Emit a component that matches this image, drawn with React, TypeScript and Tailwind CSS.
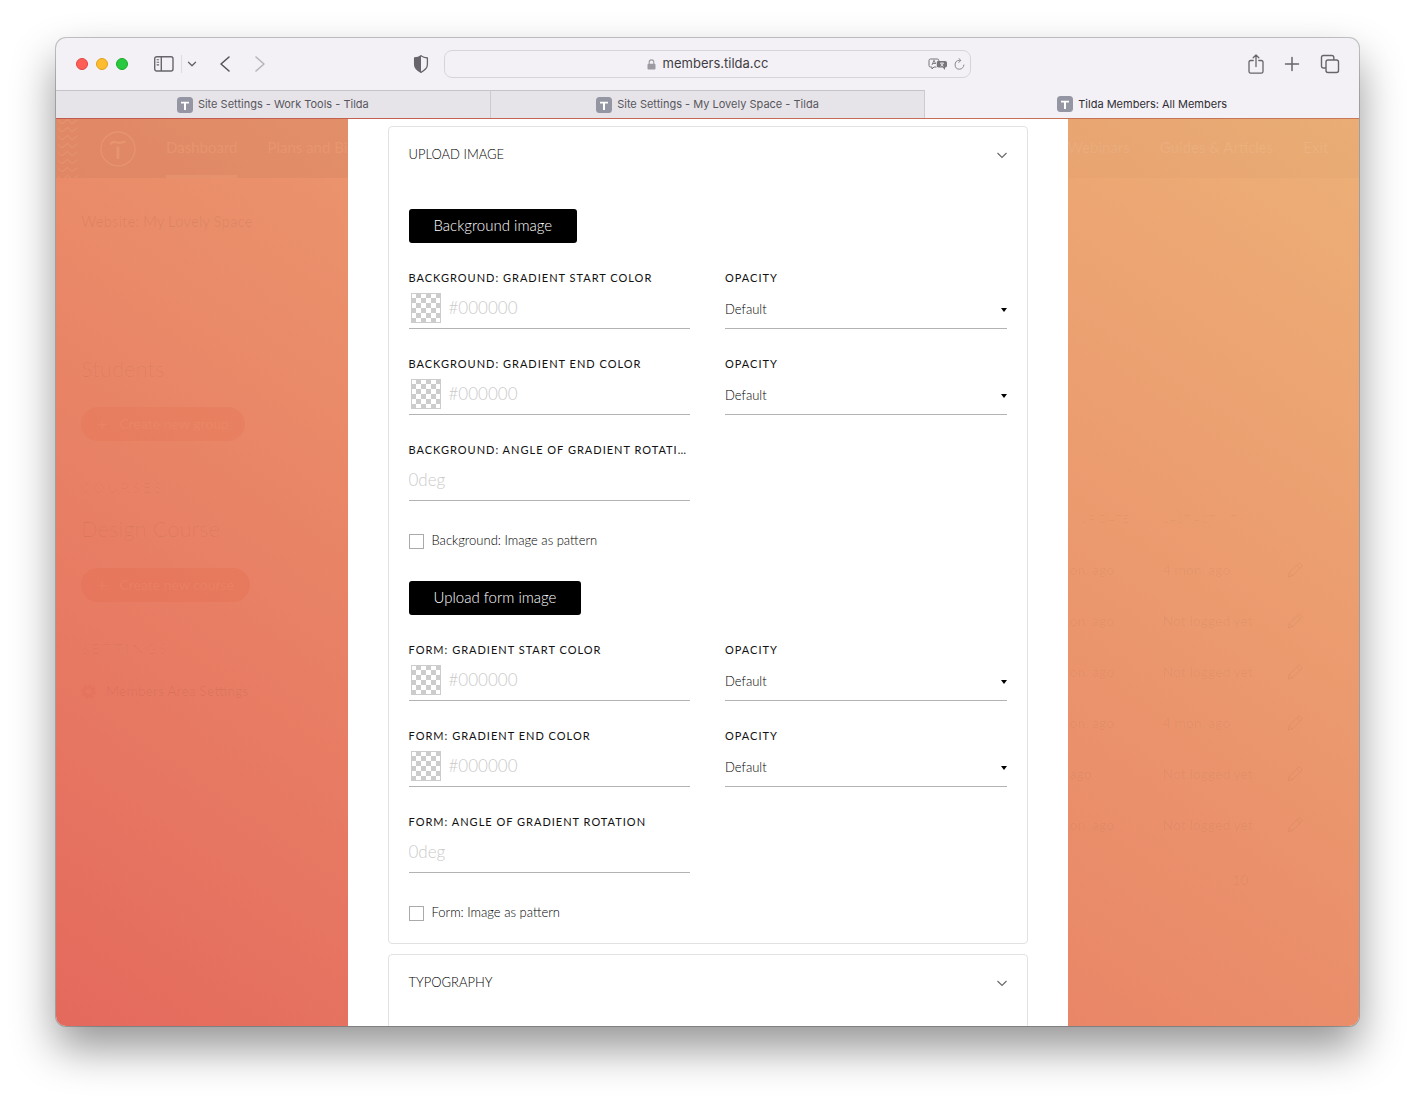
import React, { useId, useState } from "react";

const PAGE_FONT = "font-['Lato',sans-serif]";

function WavePattern() {
  const rows = [0, 8, 16, 24, 32, 40, 48, 56];
  return (
    <svg className="h-[59px] w-[22px] shrink-0 self-start" viewBox="0 0 22 59" fill="none" stroke="#ea9c75" strokeOpacity="0.5" strokeWidth="1.2">
      {rows.map((y) => (
        <path key={y} d={`M2 ${y + 1.5} L5 ${y + 4} Q6.5 ${y + 5} 8 ${y + 3.5} L10 ${y + 1.5} Q11.5 ${y} 13 ${y + 1.5} L15 ${y + 4} Q16.500 ${y + 5} 18 ${y + 3.5} L20 ${y + 1.5} L22 ${y + 0.8}`} />
      ))}
    </svg>
  );
}

function Chevron() {
  return (
    <svg className="h-3 w-2.5" viewBox="0 0 10 12" fill="none" stroke="#666" strokeWidth="1.1">
      <path d="M.5 4 5 8.500 9.500 4" />
    </svg>
  );
}

function Pencil() {
  return (
    <svg className="h-4 w-4" viewBox="0 0 16 16" fill="none" stroke="currentColor" strokeWidth="1">
      <path d="M1 15l1.200-4.500L11.500 1.200q.8-.6 1.600.1l1.600 1.600q.7.800 0 1.600L5.400 13.800zM9.800 3l3.200 3.200M2.200 10.500l3.200 3.300" />
    </svg>
  );
}

function Favicon() {
  return (
    <svg className="h-4 w-4 shrink-0" viewBox="0 0 16 16">
      <rect width="16" height="16" rx="3.500" fill="#9496a3" />
      <path d="M4 4.800h8v1.800H9V13H7V6.600H4z" fill="#fff" />
    </svg>
  );
}

function Toolbar() {
  return (
    <div className="grid h-[52px] shrink-0 grid-cols-[1fr_minmax(0,527px)_1fr] items-center">
      <div className="flex items-center pl-5 pr-[15px]">
        <div className="flex gap-2">
          <span className="h-3 w-3 rounded-full border border-[#e0443e] bg-[#ff5f57]" />
          <span className="h-3 w-3 rounded-full border border-[#dea123] bg-[#febc2e]" />
          <span className="h-3 w-3 rounded-full border border-[#1aab29] bg-[#28c840]" />
        </div>
        <button aria-label="Sidebar" className="ml-[26px]">
          <svg className="h-4 w-5" viewBox="0 0 20 16" fill="none" stroke="#67656b" strokeWidth="1.400">
            <rect x="0.700" y="0.700" width="18.300" height="14.300" rx="2" />
            <path d="M7.300 1v14" />
            <path d="M2.600 3.700h2.500M2.600 6.300h2.500M2.600 8.900h2.500" strokeWidth="1.100" />
          </svg>
        </button>
        <span className="ml-[7px] h-[18px] w-px bg-[#dddbe0]" />
        <button aria-label="Sidebar options" className="ml-[5px]">
          <svg className="h-2.5 w-2.5" viewBox="0 0 10 10" fill="none" stroke="#67656b" strokeWidth="1.400" strokeLinecap="round" strokeLinejoin="round">
            <path d="M1.500 3.300 5 6.800l3.500-3.500" />
          </svg>
        </button>
        <button aria-label="Back" className="ml-[22px]">
          <svg className="h-[18px] w-3" viewBox="0 0 12 18" fill="none" stroke="#565459" strokeWidth="1.600" strokeLinecap="round" strokeLinejoin="round">
            <path d="M10 2 2 9l8 7" />
          </svg>
        </button>
        <button aria-label="Forward" className="ml-[23px]">
          <svg className="h-[18px] w-3" viewBox="0 0 12 18" fill="none" stroke="#b6b4ba" strokeWidth="1.600" strokeLinecap="round" strokeLinejoin="round">
            <path d="M2 2l8 7-8 7" />
          </svg>
        </button>
        <button aria-label="Privacy report" className="ml-auto">
          <svg className="h-[18px] w-4" viewBox="0 0 16 18" fill="none">
            <path d="M8 .8C6.200 2.200 4 2.800 1.600 3v6.600C1.600 13 4.500 15.600 8 17.300c3.500-1.700 6.400-4.300 6.400-7.700V3C12 2.800 9.800 2.200 8 .8z" stroke="#67656b" strokeWidth="1.300" />
            <path d="M8 .8C6.200 2.200 4 2.800 1.600 3v6.600C1.600 13 4.500 15.600 8 17.300z" fill="#67656b" />
          </svg>
        </button>
      </div>
      <div className="flex h-7 items-center rounded-lg border border-[#d6d4da]">
        <div className="w-10" />
        <div className="flex flex-1 items-center justify-center gap-[7px] text-[13px] text-[#3f3d43]">
          <svg className="h-[11px] w-[9px]" viewBox="0 0 9 11" fill="none">
            <rect x="0.500" y="4.800" width="8" height="5.800" rx="1.100" fill="#9d9ba1" />
            <path d="M2.200 5V3.200a2.300 2.300 0 0 1 4.600 0V5" stroke="#9d9ba1" strokeWidth="1.100" />
          </svg>
          members.tilda.cc
        </div>
        <div className="flex w-10 items-center justify-end gap-1.5 pr-[5px]">
          <button aria-label="Translate">
            <svg className="h-3 w-5" viewBox="0 0 20 12" fill="none">
              <path d="M8.500 9H6L4 11V9H2.500Q1 9 1 7.500v-5Q1 1 2.500 1h6.800q1.500 0 1.500 1.500V3" stroke="#77757b" />
              <path d="M4 7l2-4.800L7.700 6M4.700 5.500h2.500" stroke="#77757b" strokeWidth=".9" />
              <path d="M10 3h7.300Q19 3 19 4.700v3.100q0 1.700-1.700 1.700H17V12l-2.300-2.500H10.500Q8.800 9.500 8.800 7.800V4.300Q8.800 3 10 3z" fill="#77757b" />
              <path d="M12 5.200h4M14 4.400v.8M12.500 8.300q2.200-.8 2.700-3M12.800 5.500q.7 2 2.700 2.800" stroke="#f3f1f6" strokeWidth=".8" />
            </svg>
          </button>
          <button aria-label="Reload">
            <svg className="h-3 w-[11px]" viewBox="0 0 11 12" fill="none" stroke="#8b898f" strokeWidth="1" strokeLinecap="round">
              <path d="M6.500 2.400H5.300A4.400 4.400 0 1 0 9.900 7M4.800.5l2 1.900-2 2.100" />
            </svg>
          </button>
        </div>
      </div>
      <div className="flex items-center justify-end gap-5 pr-[19px]">
        <button aria-label="Share">
          <svg className="h-5 w-4" viewBox="0 0 16 20" fill="none" stroke="#67656b" strokeWidth="1.300" strokeLinecap="round" strokeLinejoin="round">
            <path d="M5.200 6.500H2.700Q1 6.500 1 8.200v9.300q0 1.700 1.700 1.700h10.600q1.700 0 1.700-1.700V8.200q0-1.700-1.700-1.700h-2.500M8 12.500V1M5.200 3.700 8 .9l2.800 2.800" />
          </svg>
        </button>
        <button aria-label="New tab">
          <svg className="h-4 w-4" viewBox="0 0 16 16" fill="none" stroke="#67656b" strokeWidth="1.500" strokeLinecap="round">
            <path d="M8 1.500v13M1.500 8h13" />
          </svg>
        </button>
        <button aria-label="Tab overview">
          <svg className="h-5 w-5" viewBox="0 0 20 20" fill="none" stroke="#67656b" strokeWidth="1.400">
            <rect x="6" y="6" width="12.500" height="12.500" rx="2" />
            <path d="M6 14H3.500q-2 0-2-2V3.500q0-2 2-2h8.300q2 0 2 2V6" />
          </svg>
        </button>
      </div>
    </div>
  );
}

function TabBar() {
  const tabs = ["Site Settings - Work Tools - Tilda", "Site Settings - My Lovely Space - Tilda", "Tilda Members: All Members"];
  return (
    <div className="flex h-7 shrink-0 text-[11px]">
      {tabs.map((title, i) => (
        <button
          key={title}
          className={
            i === 2
              ? "flex flex-1 items-center justify-center gap-[5px] text-[#2f2d33]"
              : "flex flex-1 items-center justify-center gap-[5px] border-t border-r border-t-[#c5c3c9] border-r-[#cdcbd1] bg-[#e6e4e9] text-[#58565c]"
          }
        >
          <Favicon />
          {title}
        </button>
      ))}
    </div>
  );
}

function DimmedSidebar() {
  return (
    <div className={`min-w-0 overflow-hidden whitespace-nowrap text-black/[.06] ${PAGE_FONT}`} aria-hidden="true">
      <div className="flex h-[59px] items-center bg-black/[.035] text-[#f0a47c]/40">
        <WavePattern />
        <svg className="ml-[22px] h-9 w-9 shrink-0" viewBox="0 0 36 36" fill="none" stroke="currentColor">
          <circle cx="18" cy="18" r="17" strokeWidth="1.300" />
          <path d="M10.500 13.500Q12 9.800 16 11.300t9.500-.8" strokeWidth="2.200" />
          <path d="M18 15.500V28" strokeWidth="2.800" />
        </svg>
        <span className="ml-[30px] flex h-full items-center border-b-[3px] border-[#f0a47c]/30 text-[15px]">Dashboard</span>
        <span className="ml-[30px] pb-[3px] text-[15px]">Plans and Billing</span>
      </div>
      <div className="flex flex-col items-start px-[25px] pt-7">
        <p className="flex h-[30px] items-center text-[15px]">Website: My Lovely Space</p>
        <p className="flex h-12 items-center text-2xl text-black/[.02]">All Members</p>
        <p className="mt-6 flex h-10 items-center text-sm tracking-[3px] text-black/[.02]">GROUPS</p>
        <p className="flex h-10 items-center text-[22px] font-light">
          Students<sup className="ml-1 text-[10px]">6</sup>
        </p>
        <p className="mt-[19px] flex h-[34px] items-center gap-3 rounded-full bg-[#e6603f]/15 px-4 text-sm text-[#f0a47c]/20">
          <span className="text-lg">+</span>Create new group
        </p>
        <p className="mt-[27px] flex h-10 items-center text-sm tracking-[3px] text-black/[.03]">COURSES</p>
        <p className="flex h-10 items-center text-[22px] font-light">Design Course</p>
        <p className="mt-5 flex h-[34px] items-center gap-3 rounded-full bg-[#e6603f]/20 px-4 text-sm text-[#f0a47c]/20">
          <span className="text-lg">+</span>Create new course
        </p>
        <p className="mt-[27px] flex h-10 items-center text-sm tracking-[3px] text-black/[.03]">SETTINGS</p>
        <p className="flex h-11 items-center gap-2.5 text-sm">
          <svg className="h-[15px] w-[15px] text-[#e04f3f]/10" viewBox="0 0 16 16" fill="none" stroke="currentColor">
            <circle cx="8" cy="8" r="4.500" strokeWidth="3" />
            <circle cx="8" cy="8" r="7" strokeWidth="2" strokeDasharray="2.750 2.750" />
          </svg>
          Members Area Settings
        </p>
      </div>
    </div>
  );
}

function DimmedMembers() {
  const rows = [
    ["on. ago", "4 mon. ago"],
    ["on. ago", "Not logged yet"],
    ["on. ago", "Not logged yet"],
    ["on. ago", "4 mon. ago"],
    ["ago", "Not logged yet"],
    ["on. ago", "Not logged yet"],
  ];
  return (
    <div className={`min-w-0 overflow-hidden whitespace-nowrap text-black/[.045] ${PAGE_FONT}`} aria-hidden="true">
      <div className="flex h-[59px] items-center bg-black/[.015] pb-[3px] text-[15px] text-white/[.09]">
        <span>Webinars</span>
        <span className="ml-[30px]">Guides &amp; Articles</span>
        <span className="ml-[30px]">Exit</span>
      </div>
      <table className="mt-[315px] w-full table-fixed text-left text-sm">
        <colgroup>
          <col className="w-[95px]" />
          <col className="w-[124px]" />
          <col />
        </colgroup>
        <thead>
          <tr className="h-[51px] text-xs text-black/[.03]">
            <th className="font-normal">N UP DATE</th>
            <th className="font-normal">LAST ACTIVITY</th>
            <th />
          </tr>
        </thead>
        <tbody>
          {rows.map(([signedUp, active], i) => (
            <tr key={i} className="h-[51px]">
              <td className="pl-0.5">{signedUp}</td>
              <td>{active}</td>
              <td><Pencil /></td>
            </tr>
          ))}
        </tbody>
      </table>
      <p className="ml-[165px] mt-5 text-sm">10</p>
    </div>
  );
}

const LABEL = "block h-5 truncate text-[11px] leading-5 tracking-[1px] text-[#111] uppercase";
const INPUT = "min-w-0 flex-1 bg-transparent text-[17px] font-light text-black outline-none placeholder:text-[#cacaca]";

function ColorField({ label }: { label: string }) {
  const id = useId();
  return (
    <div className="min-w-0">
      <label htmlFor={id} className={LABEL}>{label}</label>
      <div className="flex h-[41px] items-center gap-2 border-b border-[#b3b3b3] pl-0.5">
        <svg className="h-[30px] w-[30px]" viewBox="0 0 30 30" aria-hidden="true">
          <rect width="30" height="30" fill="#fff" />
          {[0, 1, 2, 3, 4, 5].flatMap((r) =>
            [0, 1, 2, 3, 4, 5].filter((c) => (r + c) % 2 === 1).map((c) => (
              <rect key={`${r}-${c}`} x={c * 5} y={r * 5} width="5" height="5" fill="#ccc" />
            ))
          )}
          <rect x=".5" y=".5" width="29" height="29" fill="none" stroke="#ccc" />
        </svg>
        <input id={id} type="text" placeholder="#000000" className={INPUT} />
      </div>
    </div>
  );
}

function AngleField({ label }: { label: string }) {
  const id = useId();
  return (
    <div className="min-w-0">
      <label htmlFor={id} className={LABEL}>{label}</label>
      <div className="flex h-[41px] items-center border-b border-[#b3b3b3]">
        <input id={id} type="text" placeholder="0deg" className={INPUT} />
      </div>
    </div>
  );
}

function OpacityField() {
  const id = useId();
  return (
    <div className="min-w-0">
      <label htmlFor={id} className={LABEL}>Opacity</label>
      <div className="relative h-[41px] border-b border-[#b3b3b3]">
        <select id={id} className="h-full w-full appearance-none bg-transparent pt-1 text-[13px] font-light text-black outline-none">
          <option>Default</option>
          <option>50%</option>
        </select>
        <svg className="pointer-events-none absolute top-5 right-0 h-1 w-1.5" viewBox="0 0 6 4">
          <path d="M0 0h6L3 4z" fill="#000" />
        </svg>
      </div>
    </div>
  );
}

function ImageSettings({ button, name }: { button: string; name: string }) {
  const [checked, setChecked] = useState(false);
  return (
    <div className="flex flex-col items-stretch gap-[25px]">
      <button className="h-[34px] self-start rounded-[3px] bg-black px-[25px] pb-0.5 text-[15px] font-light text-white">{button}</button>
      <div className="grid grid-cols-2 gap-x-[35px] gap-y-[25px]">
        <ColorField label={`${name}: Gradient start color`} />
        <OpacityField />
        <ColorField label={`${name}: Gradient end color`} />
        <OpacityField />
        <AngleField label={`${name}: Angle of gradient rotation`} />
      </div>
      <label className="flex h-[30px] items-center gap-2 self-start text-[13px] font-light text-black">
        <input
          type="checkbox"
          checked={checked}
          onChange={(e) => setChecked(e.target.checked)}
          className="h-[15px] w-[15px] appearance-none border border-[#aaa] bg-white checked:bg-black"
        />
        {name}: Image as pattern
      </label>
    </div>
  );
}

function Card({ title, children }: { title: string; children?: React.ReactNode }) {
  return (
    <section className="shrink-0 rounded border border-[#e2e2e2] px-5 pb-[15px]">
      <button className="flex h-14 w-full items-center justify-between text-[13px] font-light text-black">
        {title}
        <Chevron />
      </button>
      <div className="flex min-h-20 flex-col gap-[25px] pt-[26px]">{children}</div>
    </section>
  );
}

export default function App() {
  return (
    <div className="flex h-screen flex-col bg-white px-14 pt-[38px] pb-[74px] font-['Inter',sans-serif]">
      <div className="flex min-h-0 flex-1 flex-col overflow-hidden rounded-[10px] bg-[#f3f1f6] shadow-[0_0_0_1px_rgba(0,0,0,0.22),0_22px_44px_rgba(0,0,0,0.42)]">
        <Toolbar />
        <TabBar />
        <main className="grid min-h-0 flex-1 grid-cols-[1fr_minmax(0,720px)_1fr] overflow-hidden border-t border-black/15 bg-linear-to-tr from-[#e4695d] to-[#edb077]">
          <DimmedSidebar />
          <div className={`flex min-h-0 flex-col gap-2.5 overflow-hidden bg-white px-10 pt-[7px] ${PAGE_FONT}`}>
            <Card title="UPLOAD IMAGE">
              <ImageSettings button="Background image" name="Background" />
              <ImageSettings button="Upload form image" name="Form" />
            </Card>
            <Card title="TYPOGRAPHY" />
          </div>
          <DimmedMembers />
        </main>
      </div>
    </div>
  );
}
